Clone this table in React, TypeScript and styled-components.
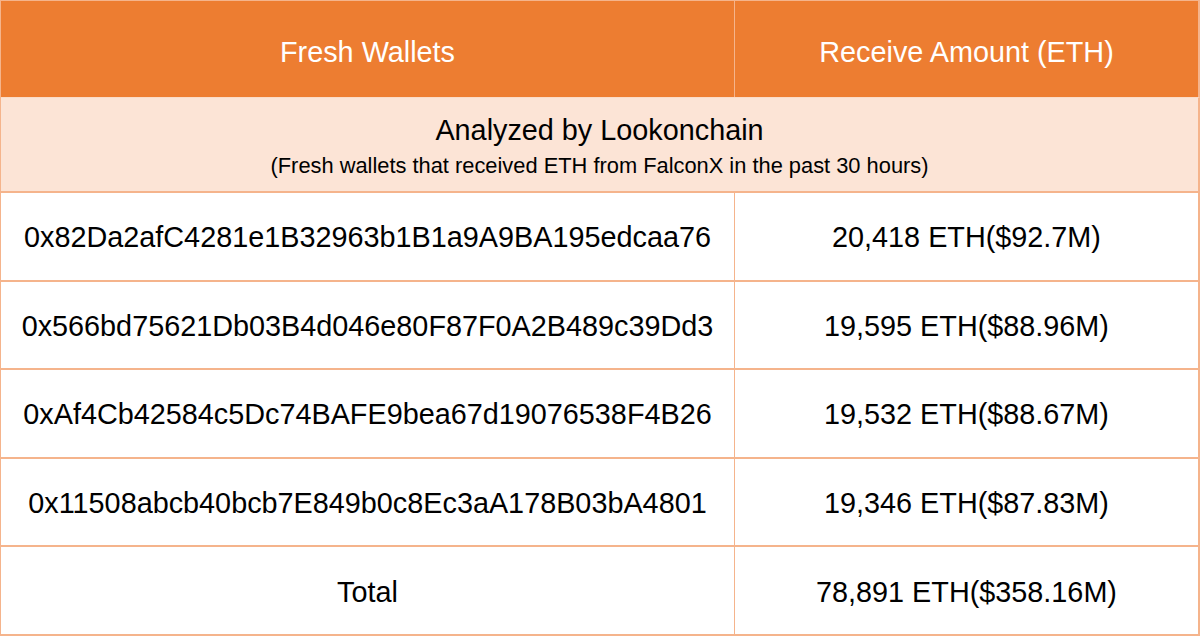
import React from "react";
import styled, { createGlobalStyle } from "styled-components";

const GlobalStyle = createGlobalStyle`
  html, body {
    margin: 0;
    padding: 0;
    background: #ffffff;
  }
  body {
    font-family: "Liberation Sans", Arial, Helvetica, sans-serif;
    color: #000000;
  }
`;

const LINE = "#F5B48C";

const Table = styled.div`
  box-sizing: border-box;
  width: 1200px;
  height: 636px;
  display: grid;
  grid-template-columns: 734px 1fr;
  grid-template-rows: 96px 96px repeat(5, 1fr);
  border-top: 1px solid ${LINE};
  border-left: 1px solid ${LINE};
  font-family: "Liberation Sans", Arial, Helvetica, sans-serif;
`;

const HeadCell = styled.div<{ $last?: boolean }>`
  box-sizing: border-box;
  display: flex;
  align-items: center;
  justify-content: center;
  padding-top: 6px;
  background: #ED7D31;
  color: #ffffff;
  font-size: 28.8px;
  border-right: ${(p) => (p.$last ? "2px" : "1px")} solid ${LINE};
`;

const Banner = styled.div`
  box-sizing: border-box;
  grid-column: 1 / span 2;
  display: flex;
  flex-direction: column;
  align-items: center;
  padding-top: 15px;
  background: #FCE4D6;
  border-right: 2px solid ${LINE};
  border-bottom: 2px solid ${LINE};
  border-top: 1px solid #FBDCC8;
`;

const BannerTitle = styled.div`
  font-size: 28.8px;
  line-height: 34px;
`;

const BannerNote = styled.div`
  font-size: 21.85px;
  line-height: 37px;
`;

const Cell = styled.div<{ $last?: boolean }>`
  box-sizing: border-box;
  display: flex;
  align-items: center;
  justify-content: center;
  padding-top: 3px;
  font-size: 28.8px;
  background: #ffffff;
  border-bottom: 2px solid ${LINE};
  border-right: ${(p) => (p.$last ? "2px" : "1.5px")} solid ${LINE};
  white-space: nowrap;
`;

const rows: [string, string][] = [
  ["0x82Da2afC4281e1B32963b1B1a9A9BA195edcaa76", "20,418 ETH($92.7M)"],
  ["0x566bd75621Db03B4d046e80F87F0A2B489c39Dd3", "19,595 ETH($88.96M)"],
  ["0xAf4Cb42584c5Dc74BAFE9bea67d19076538F4B26", "19,532 ETH($88.67M)"],
  ["0x11508abcb40bcb7E849b0c8Ec3aA178B03bA4801", "19,346 ETH($87.83M)"],
  ["Total", "78,891 ETH($358.16M)"],
];

export default function App() {
  return (
    <>
      <GlobalStyle />
      <Table>
        <HeadCell>Fresh Wallets</HeadCell>
        <HeadCell $last>Receive Amount (ETH)</HeadCell>
        <Banner>
          <BannerTitle>Analyzed by Lookonchain</BannerTitle>
          <BannerNote>
            (Fresh wallets that received ETH from FalconX in the past 30 hours)
          </BannerNote>
        </Banner>
        {rows.map(([wallet, amount]) => (
          <React.Fragment key={wallet}>
            <Cell>{wallet}</Cell>
            <Cell $last>{amount}</Cell>
          </React.Fragment>
        ))}
      </Table>
    </>
  );
}
